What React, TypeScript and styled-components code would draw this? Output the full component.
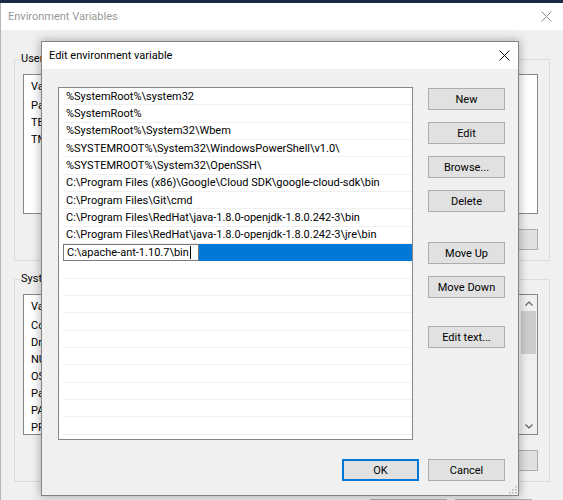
import styled, { createGlobalStyle } from 'styled-components';

const FONT = `Roboto, 'Noto Sans', 'Liberation Sans', sans-serif`;

const paths = [
  '%SystemRoot%\\system32',
  '%SystemRoot%',
  '%SystemRoot%\\System32\\Wbem',
  '%SYSTEMROOT%\\System32\\WindowsPowerShell\\v1.0\\',
  '%SYSTEMROOT%\\System32\\OpenSSH\\',
  'C:\\Program Files (x86)\\Google\\Cloud SDK\\google-cloud-sdk\\bin',
  'C:\\Program Files\\Git\\cmd',
  'C:\\Program Files\\RedHat\\java-1.8.0-openjdk-1.8.0.242-3\\bin',
  'C:\\Program Files\\RedHat\\java-1.8.0-openjdk-1.8.0.242-3\\jre\\bin',
];

const editing = 'C:\\apache-ant-1.10.7\\bin';
const emptyRows = 12;

const userVars = ['Path', 'TEMP', 'TMP'];
const systemVars = ['ComSpec', 'DriverData', 'NUMBER_OF_PROCESSORS', 'OS', 'Path', 'PATHEXT', 'PROCESSOR_ARCHITECTURE'];

const CloseIcon = ({ color }: { color: string }) => (
  <svg width="11" height="11" viewBox="0 0 11 11">
    <path d="M0.5 0.5 L10.5 10.5 M10.5 0.5 L0.5 10.5" stroke={color} strokeWidth="1" fill="none" />
  </svg>
);

const Chevron = ({ up }: { up?: boolean }) => (
  <svg width="8" height="5" viewBox="0 0 8 5">
    <path d={up ? 'M0.5 4.5 L4 1 L7.5 4.5' : 'M0.5 0.5 L4 4 L7.5 0.5'} stroke="#606060" strokeWidth="1.2" fill="none" />
  </svg>
);

const Grip = () => (
  <svg width="9" height="9" viewBox="0 0 9 9">
    {[
      [7, 1],
      [4, 4],
      [7, 4],
      [1, 7],
      [4, 7],
      [7, 7],
    ].map(([x, y]) => (
      <rect key={`${x}-${y}`} x={x} y={y} width="1.5" height="1.5" fill="#b0b0b0" />
    ))}
  </svg>
);

const BackList = ({ items, scroll }: { items: string[]; scroll?: boolean }) => (
  <ListFrame $height={scroll ? 141 : 140}>
    <ListContent>
      <ListHeader>
        <span>Variable</span>
        <span>Value</span>
      </ListHeader>
      {items.map((name) => (
        <ListItem key={name}>{name}</ListItem>
      ))}
    </ListContent>
    {scroll && (
      <Scrollbar>
        <ScrollArrow>
          <Chevron up />
        </ScrollArrow>
        <ScrollTrack>
          <ScrollThumb />
        </ScrollTrack>
        <ScrollArrow>
          <Chevron />
        </ScrollArrow>
      </Scrollbar>
    )}
  </ListFrame>
);

const App = () => {
  return (
    <>
      <GlobalStyle />
      <Desktop>
        <BackWindow>
          <BackTitleBar>
            <span>Environment Variables</span>
            <CloseIcon color="#8f8f8f" />
          </BackTitleBar>
          <BackBody>
            <GroupBox>
              <Legend>User variables for user</Legend>
              <BackList items={userVars} />
              <BackButtons>
                <BackButton>New...</BackButton>
                <BackButton>Edit...</BackButton>
                <BackButton>Delete</BackButton>
              </BackButtons>
            </GroupBox>
            <GroupBox>
              <Legend>System variables</Legend>
              <BackList items={systemVars} scroll />
              <BackButtons>
                <BackButton>New...</BackButton>
                <BackButton>Edit...</BackButton>
                <BackButton>Delete</BackButton>
              </BackButtons>
            </GroupBox>
            <BackFooter>
              <BackButton>OK</BackButton>
              <BackButton>Cancel</BackButton>
            </BackFooter>
          </BackBody>
        </BackWindow>

        <Dialog>
          <DialogTitleBar>
            <span>Edit environment variable</span>
            <CloseIcon color="#111" />
          </DialogTitleBar>
          <DialogBody>
            <MainRow>
              <PathList>
                {paths.map((p) => (
                  <PathRow key={p}>{p}</PathRow>
                ))}
                <PathRow $selected>
                  <EditField>
                    {editing}
                    <Caret />
                  </EditField>
                </PathRow>
                {Array.from({ length: emptyRows }).map((_, i) => (
                  <PathRow key={`empty-${i}`} />
                ))}
              </PathList>
              <ButtonColumn>
                <DlgButton>New</DlgButton>
                <DlgButton $space={12}>Edit</DlgButton>
                <DlgButton $space={12}>Browse...</DlgButton>
                <DlgButton $space={12}>Delete</DlgButton>
                <DlgButton $space={30}>Move Up</DlgButton>
                <DlgButton $space={12}>Move Down</DlgButton>
                <DlgButton $space={28}>Edit text...</DlgButton>
              </ButtonColumn>
            </MainRow>
            <DialogFooter>
              <DlgButton $primary>OK</DlgButton>
              <DlgButton>Cancel</DlgButton>
            </DialogFooter>
          </DialogBody>
          <GripCorner>
            <Grip />
          </GripCorner>
        </Dialog>
      </Desktop>
    </>
  );
};

export default App;

const GlobalStyle = createGlobalStyle`
  html, body {
    margin: 0;
    padding: 0;
  }
  body {
    background: #1b2a42;
    font-family: ${FONT};
    font-size: 11px;
    color: #000;
  }
`;

const Desktop = styled.div`
  position: relative;
  width: 563px;
  height: 500px;
  padding-top: 3px;
  box-sizing: border-box;
  overflow: hidden;
`;

const BackWindow = styled.div`
  display: flex;
  flex-direction: column;
  height: 560px;
  background: #f0f0f0;
  border-left: 1px solid #b5b5b5;
`;

const BackTitleBar = styled.div`
  height: 27px;
  flex-shrink: 0;
  display: flex;
  align-items: center;
  justify-content: space-between;
  padding: 0 11px 0 7px;
  background: #fff;
  color: #999;
`;

const BackBody = styled.div`
  display: flex;
  flex-direction: column;
  padding: 21px 13px 0 13px;
`;

const GroupBox = styled.fieldset`
  margin: 0;
  min-width: 0;
  padding: 7px 11px 10px 8px;
  border: 1px solid #dcdcdc;
  & + & {
    margin-top: 10px;
  }
`;

const Legend = styled.legend`
  margin-left: -3px;
  padding: 0 1px;
  line-height: 16px;
`;

const ListFrame = styled.div<{ $height: number }>`
  display: flex;
  height: ${({ $height }) => $height}px;
  box-sizing: border-box;
  background: #fff;
  border: 1px solid #828790;
  overflow: hidden;
`;

const ListContent = styled.div`
  flex: 1;
  min-width: 0;
`;

const ListHeader = styled.div`
  display: grid;
  grid-template-columns: 160px 1fr;
  height: 22px;
  align-items: center;
  padding-left: 7px;
  span + span {
    border-left: 1px solid #e5e5e5;
    padding-left: 6px;
  }
`;

const ListItem = styled.div`
  height: 17px;
  line-height: 17px;
  padding-left: 7px;
  white-space: nowrap;
`;

const Scrollbar = styled.div`
  width: 17px;
  display: flex;
  flex-direction: column;
  background: #f0f0f0;
`;

const ScrollArrow = styled.div`
  height: 16px;
  display: flex;
  align-items: center;
  justify-content: center;
`;

const ScrollTrack = styled.div`
  flex: 1;
  padding: 0 1px;
`;

const ScrollThumb = styled.div`
  height: 43px;
  background: #cdcdcd;
`;

const BackButtons = styled.div`
  display: flex;
  justify-content: flex-end;
  gap: 8px;
  margin-top: 15px;
`;

const BackFooter = styled.div`
  display: flex;
  justify-content: flex-end;
  gap: 8px;
  margin-top: 17px;
  padding-right: 18px;
`;

const BackButton = styled.div`
  width: 77px;
  height: 21px;
  box-sizing: border-box;
  display: flex;
  align-items: center;
  justify-content: center;
  background: #e1e1e1;
  border: 1px solid #adadad;
`;

const Dialog = styled.div`
  position: absolute;
  left: 41px;
  top: 41px;
  width: 478px;
  height: 455px;
  box-sizing: border-box;
  display: flex;
  flex-direction: column;
  background: #f0f0f0;
  border: 1px solid #838383;
  box-shadow: 0 0 9px 1px rgba(0, 0, 0, 0.28);
`;

const DialogTitleBar = styled.div`
  height: 27px;
  flex-shrink: 0;
  display: flex;
  align-items: center;
  justify-content: space-between;
  padding: 0 8px 0 7px;
  background: #fff;
`;

const DialogBody = styled.div`
  flex: 1;
  display: flex;
  flex-direction: column;
  padding: 18px 13px 14px 16px;
`;

const MainRow = styled.div`
  display: flex;
  gap: 15px;
`;

const PathList = styled.div`
  width: 355px;
  height: 353px;
  box-sizing: border-box;
  background: #fff;
  border: 1px solid #828790;
  overflow: hidden;
`;

const PathRow = styled.div<{ $selected?: boolean }>`
  height: 17.33px;
  box-sizing: border-box;
  margin-left: 4px;
  padding-left: ${({ $selected }) => ($selected ? 0 : 3)}px;
  display: flex;
  align-items: center;
  white-space: nowrap;
  background: ${({ $selected }) => ($selected ? '#0078d7' : '#fff')};
  border-bottom: ${({ $selected }) => ($selected ? 'none' : '1px solid #f0f0f0')};
`;

const EditField = styled.div`
  width: 136px;
  height: 100%;
  box-sizing: border-box;
  display: flex;
  align-items: center;
  padding-left: 3px;
  background: #fff;
  border: 1px solid #7a7a7a;
`;

const Caret = styled.span`
  width: 1px;
  height: 13px;
  margin-left: 1px;
  background: #000;
`;

const ButtonColumn = styled.div`
  width: 77px;
  display: flex;
  flex-direction: column;
  padding-top: 1px;
`;

const DlgButton = styled.div<{ $space?: number; $primary?: boolean }>`
  width: 77px;
  height: 22px;
  box-sizing: border-box;
  margin-top: ${({ $space }) => $space ?? 0}px;
  display: flex;
  align-items: center;
  justify-content: center;
  background: #e1e1e1;
  border: 1px solid ${({ $primary }) => ($primary ? '#0078d7' : '#adadad')};
  box-shadow: ${({ $primary }) => ($primary ? 'inset 0 0 0 1px #0078d7' : 'none')};
`;

const DialogFooter = styled.div`
  display: flex;
  justify-content: flex-end;
  gap: 9px;
  margin-top: auto;
`;

const GripCorner = styled.div`
  position: absolute;
  right: 1px;
  bottom: 1px;
  display: flex;
`;
